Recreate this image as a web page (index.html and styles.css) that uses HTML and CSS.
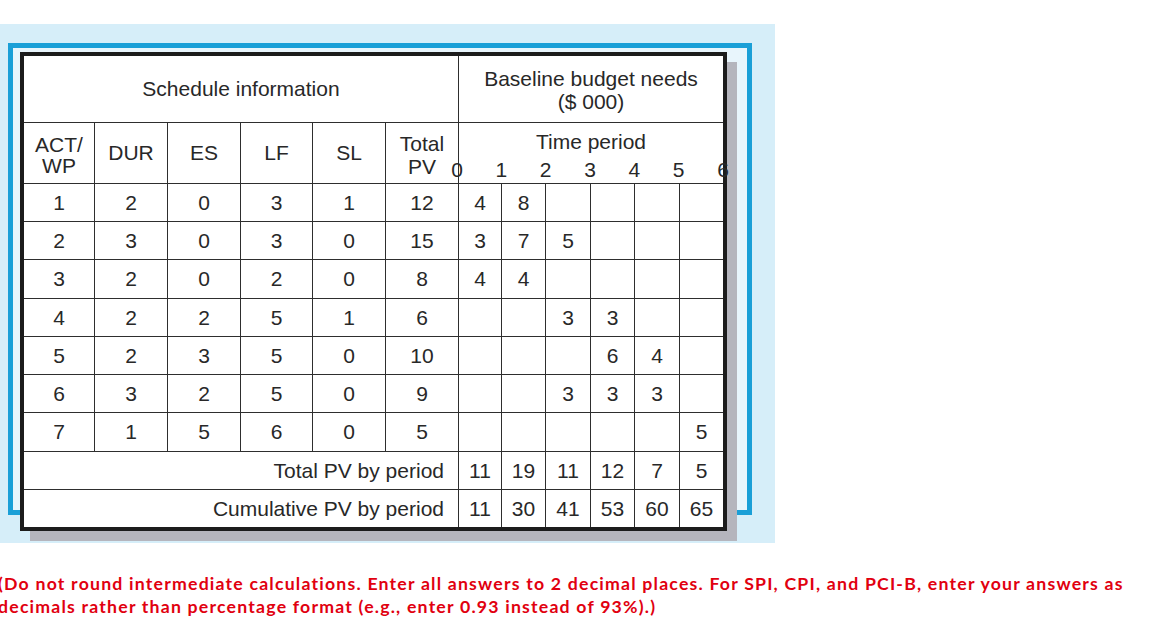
FILE: index.html
```html
<!DOCTYPE html>
<html>
<head>
<meta charset="utf-8">
<title>Schedule information</title>
<link rel="stylesheet" href="styles.css">
</head>
<body>
<div class="panel">
  <div class="frame"></div>
  <div class="sheet">
    <div class="grid">
      <div class="c h1 sched">Schedule information</div>
      <div class="c h1 budget"><span>Baseline budget needs<br>($ 000)</span></div>

      <div class="c h2 act">ACT/<br>WP</div>
      <div class="c h2">DUR</div>
      <div class="c h2">ES</div>
      <div class="c h2">LF</div>
      <div class="c h2">SL</div>
      <div class="c h2 tpv">Total<br>PV</div>
      <div class="c h2 time">
        <div class="tp">Time period</div>
        <div class="ticks"><span>0</span><span>1</span><span>2</span><span>3</span><span>4</span><span>5</span><span>6</span></div>
      </div>

      <div class="c">1</div><div class="c">2</div><div class="c">0</div><div class="c">3</div><div class="c">1</div><div class="c">12</div>
      <div class="c">4</div><div class="c">8</div><div class="c"></div><div class="c"></div><div class="c"></div><div class="c"></div>

      <div class="c">2</div><div class="c">3</div><div class="c">0</div><div class="c">3</div><div class="c">0</div><div class="c">15</div>
      <div class="c">3</div><div class="c">7</div><div class="c">5</div><div class="c"></div><div class="c"></div><div class="c"></div>

      <div class="c">3</div><div class="c">2</div><div class="c">0</div><div class="c">2</div><div class="c">0</div><div class="c">8</div>
      <div class="c">4</div><div class="c">4</div><div class="c"></div><div class="c"></div><div class="c"></div><div class="c"></div>

      <div class="c">4</div><div class="c">2</div><div class="c">2</div><div class="c">5</div><div class="c">1</div><div class="c">6</div>
      <div class="c"></div><div class="c"></div><div class="c">3</div><div class="c">3</div><div class="c"></div><div class="c"></div>

      <div class="c">5</div><div class="c">2</div><div class="c">3</div><div class="c">5</div><div class="c">0</div><div class="c">10</div>
      <div class="c"></div><div class="c"></div><div class="c"></div><div class="c">6</div><div class="c">4</div><div class="c"></div>

      <div class="c">6</div><div class="c">3</div><div class="c">2</div><div class="c">5</div><div class="c">0</div><div class="c">9</div>
      <div class="c"></div><div class="c"></div><div class="c">3</div><div class="c">3</div><div class="c">3</div><div class="c"></div>

      <div class="c">7</div><div class="c">1</div><div class="c">5</div><div class="c">6</div><div class="c">0</div><div class="c">5</div>
      <div class="c"></div><div class="c"></div><div class="c"></div><div class="c"></div><div class="c"></div><div class="c">5</div>

      <div class="c label">Total PV by period</div>
      <div class="c">11</div><div class="c">19</div><div class="c">11</div><div class="c">12</div><div class="c">7</div><div class="c">5</div>

      <div class="c label">Cumulative PV by period</div>
      <div class="c">11</div><div class="c">30</div><div class="c">41</div><div class="c">53</div><div class="c">60</div><div class="c">65</div>
    </div>
  </div>
</div>
<p class="note">(Do not round intermediate calculations. Enter all answers to 2 decimal places. For SPI, CPI, and PCI-B, enter your answers as<br>decimals rather than percentage format (e.g., enter 0.93 instead of 93%).)</p>
</body>
</html>
```

FILE: styles.css
```css
html, body {
  margin: 0;
  padding: 0;
  background: #ffffff;
}

.panel {
  position: relative;
  box-sizing: border-box;
  margin-top: 24px;
  width: 775px;
  height: 519px;
  padding: 28px 0 0 20px;
  background: #d6eef9;
}

.frame {
  position: absolute;
  left: 8px;
  top: 19px;
  width: 744px;
  height: 472px;
  box-sizing: border-box;
  border: 5px solid #1a9fd7;
  background: #e8f5fc;
}

.sheet {
  position: relative;
  width: 699px;
  border: 4px solid #1c1c1c;
  background: #ffffff;
  box-shadow: 10px 10px 0 #b5b5bd;
}

.grid {
  display: grid;
  grid-template-columns: 70px 72px 72px 71px 72px 72px 42px 43px 44px 43px 44px 43px;
  grid-template-rows: 66px 60px 37px 37px 38px 37px 37px 37px 38px 37px 37px;
  gap: 1px;
  background: #2e2e2e;
  font-family: "Liberation Sans", Arial, Helvetica, sans-serif;
  font-size: 21px;
  color: #282828;
}

.c {
  background: #ffffff;
  display: flex;
  align-items: center;
  justify-content: center;
  text-align: center;
  line-height: 24px;
}

.sched {
  grid-column: 1 / 7;
}

.budget {
  grid-column: 7 / 13;
  line-height: 23px;
  padding-top: 2px;
}

.act {
  line-height: 21px;
  padding-top: 4px;
}

.tpv {
  line-height: 23px;
  padding-top: 3px;
}

.time {
  grid-column: 7 / 13;
  flex-direction: column;
  justify-content: flex-start;
  align-items: stretch;
}

.tp {
  line-height: 26px;
  padding-top: 6px;
}

.ticks {
  display: flex;
  justify-content: space-between;
  margin: 2px -6px 0 -8px;
  line-height: 26px;
}

.ticks span {
  width: 12px;
  text-align: center;
}

.label {
  grid-column: 1 / 7;
  justify-content: flex-end;
  padding-right: 14px;
}

.note {
  margin: 29px 0 0 -2px;
  font-family: Lato, "Open Sans", sans-serif;
  font-weight: 700;
  font-size: 17.7px;
  letter-spacing: 1.2px;
  line-height: 23px;
  color: #e1000f;
  white-space: nowrap;
}
```
